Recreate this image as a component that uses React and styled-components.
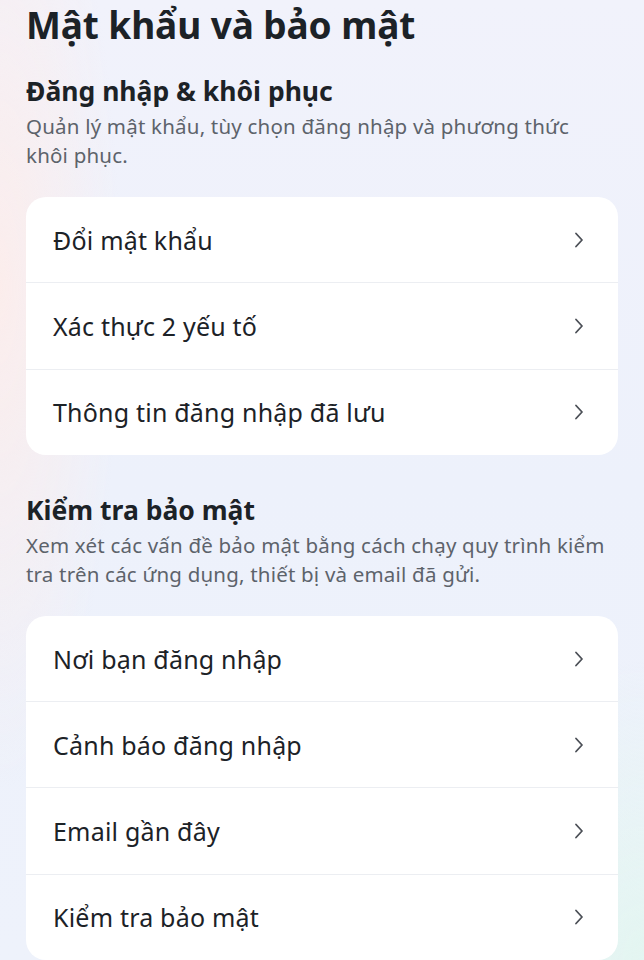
import styled, { createGlobalStyle } from 'styled-components'

const Global = createGlobalStyle`
  html, body {
    margin: 0;
    padding: 0;
  }
  body {
    font-family: 'Noto Sans', 'Liberation Sans', sans-serif;
    background: #eef1fb;
  }
`

const sections = [
  {
    title: 'Đăng nhập & khôi phục',
    desc: 'Quản lý mật khẩu, tùy chọn đăng nhập và phương thức khôi phục.',
    items: ['Đổi mật khẩu', 'Xác thực 2 yếu tố', 'Thông tin đăng nhập đã lưu'],
  },
  {
    title: 'Kiểm tra bảo mật',
    desc: 'Xem xét các vấn đề bảo mật bằng cách chạy quy trình kiểm tra trên các ứng dụng, thiết bị và email đã gửi.',
    items: ['Nơi bạn đăng nhập', 'Cảnh báo đăng nhập', 'Email gần đây', 'Kiểm tra bảo mật'],
  },
]

const Chevron = () => (
  <svg width='14' height='18' viewBox='0 0 14 18' fill='none'>
    <path
      d='M4 2.5l6 6.5-6 6.5'
      stroke='#4b4f56'
      strokeWidth='1.8'
      strokeLinecap='round'
      strokeLinejoin='round'
    />
  </svg>
)

const App = () => {
  return (
    <>
      <Global />
      <Page>
        <Title>Mật khẩu và bảo mật</Title>
        {sections.map((s) => (
          <Section key={s.title}>
            <SectionHead>{s.title}</SectionHead>
            <SectionDesc>{s.desc}</SectionDesc>
            <Card>
              {s.items.map((item) => (
                <Row key={item}>
                  <span>{item}</span>
                  <Chevron />
                </Row>
              ))}
            </Card>
          </Section>
        ))}
      </Page>
    </>
  )
}

const Page = styled.div`
  min-height: 960px;
  box-sizing: border-box;
  padding: 0 26px 0 26px;
  background:
    radial-gradient(ellipse 120px 500px at 0% 30%, rgba(255, 236, 232, 0.8), transparent),
    radial-gradient(ellipse 200px 300px at 100% 100%, rgba(226, 246, 240, 0.9), transparent),
    linear-gradient(180deg, #f1f2fb 0%, #edf1fb 50%, #eef2fb 100%);
  overflow: hidden;
`

const Title = styled.h1`
  margin: 0;
  padding-top: 2px;
  font-size: 37px;
  line-height: 46px;
  font-weight: 700;
  color: #1c2227;
  letter-spacing: -0.1px;
`

const Section = styled.section`
  margin-top: 26px;
  & + & {
    margin-top: 38px;
  }
`

const SectionHead = styled.h2`
  margin: 0;
  font-size: 26.5px;
  line-height: 34px;
  font-weight: 700;
  color: #1c2227;
`

const SectionDesc = styled.p`
  margin: 4px 0 0;
  padding-right: 8px;
  font-size: 20.5px;
  line-height: 29px;
  letter-spacing: 0.2px;
  color: #5d636b;
`

const Card = styled.div`
  margin-top: 27px;
  background: #fff;
  border-radius: 20px;
  overflow: hidden;
`

const Row = styled.div`
  height: 85.3px;
  display: flex;
  align-items: center;
  justify-content: space-between;
  padding: 0 32px 0 27px;
  font-size: 25px;
  letter-spacing: 0.2px;
  color: #1c2227;
  & + & {
    border-top: 1px solid #eceef2;
  }
`

export default App
